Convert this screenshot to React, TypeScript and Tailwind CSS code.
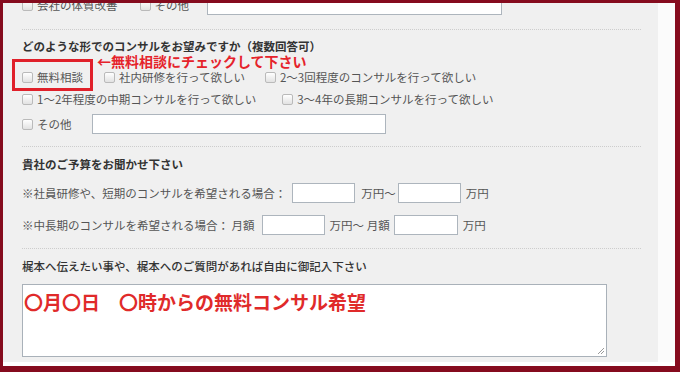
const FONT = { fontFamily: '"Noto Sans CJK JP", "Noto Sans", sans-serif' }

function Box() {
  return (
    <span className="inline-block w-[11px] h-[11px] shrink-0 rounded-[2px] border border-[#bababa] bg-linear-to-b from-white to-[#e2e2e2]" />
  )
}

function Opt({ label, className = '' }: { label: string; className?: string }) {
  return (
    <span className={`flex items-center gap-[4px] ${className}`}>
      <Box />
      <span className="whitespace-nowrap">{label}</span>
    </span>
  )
}

function Field({ w, className = '' }: { w: string; className?: string }) {
  return <input readOnly className={`${w} h-[20px] shrink-0 border border-[#adb5bd] bg-white ${className}`} />
}

function Sep({ className = '' }: { className?: string }) {
  return <div className={`border-t border-dotted border-[#cdcdcd] mr-[17px] ${className}`} />
}

export default function App() {
  return (
    <div
      className="w-[680px] h-[372px] bg-[#850b1e] pt-[3px] pl-[3px] pr-[5px] pb-[6px] text-[11.5px] leading-[14px] text-[#555]"
      style={FONT}
    >
      <div className="flex h-full bg-white pb-[4px]">
        {/* form panel */}
        <div className="w-[655px] h-full overflow-hidden bg-[#f0f0f0] pl-[19px]">
          {/* previous question, scrolled off */}
          <div className="-mt-[8px] flex items-center h-[20px]">
            <Opt label="会社の体質改善" />
            <Opt label="その他" className="ml-[22px]" />
            <Field w="w-[295px]" className="ml-[18px]" />
          </div>

          <Sep className="mt-[14px]" />

          <div className="mt-[8px] h-[16px] leading-[16px] font-bold text-[#333]">
            どのような形でのコンサルをお望みですか（複数回答可）
          </div>
          <div className="ml-[75px] h-[15px] leading-[15px] text-[14px] font-bold text-[#e5232b] whitespace-nowrap">
            ←無料相談にチェックして下さい
          </div>

          <div className="relative mt-[1px] flex items-center h-[14px]">
            <Opt label="無料相談" />
            <Opt label="社内研修を行って欲しい" className="ml-[21px]" />
            <Opt label="2～3回程度のコンサルを行って欲しい" className="ml-[20px]" />
            {/* highlight frame */}
            <div className="absolute -left-[10px] -top-[11px] w-[81px] h-[32px] border-[3px] border-[#e0202a]" />
          </div>

          <div className="mt-[8px] flex items-center h-[14px]">
            <Opt label="1～2年程度の中期コンサルを行って欲しい" />
            <Opt label="3～4年の長期コンサルを行って欲しい" className="ml-[26px]" />
          </div>

          <div className="mt-[8px] flex items-center h-[20px]">
            <Opt label="その他" />
            <Field w="w-[294px]" className="ml-[20px]" />
          </div>

          <Sep className="mt-[12px]" />

          <div className="mt-[9px] h-[16px] leading-[16px] font-bold text-[#333]">
            貴社のご予算をお聞かせ下さい
          </div>

          <div className="mt-[11px] flex items-center h-[20px] whitespace-nowrap">
            <span>※社員研修や、短期のコンサルを希望される場合：</span>
            <Field w="w-[63px]" className="ml-[6px]" />
            <span className="ml-[6px]">万円～</span>
            <Field w="w-[63px]" className="ml-[2px]" />
            <span className="ml-[5px]">万円</span>
          </div>

          <div className="mt-[12px] flex items-center h-[20px] whitespace-nowrap">
            <span>※中長期のコンサルを希望される場合： 月額</span>
            <Field w="w-[63px]" className="ml-[7px]" />
            <span className="ml-[5px]">万円～ 月額</span>
            <Field w="w-[64px]" className="ml-[4px]" />
            <span className="ml-[5px]">万円</span>
          </div>

          <Sep className="mt-[13px]" />

          <div className="mt-[9px] h-[16px] leading-[16px] font-medium text-[#333]">
            梶本へ伝えたい事や、梶本へのご質問があれば自由に御記入下さい
          </div>

          <div className="relative mt-[10px] w-[585px] h-[73px] border border-[#a9b1b9] bg-white pl-[1px] pt-[5px]">
            <div className="text-[19px] leading-[24px] font-bold text-[#e02a2a] whitespace-nowrap">
              〇月〇日　〇時からの無料コンサル希望
            </div>
            <svg className="absolute right-[1px] bottom-[1px]" width="8" height="8" viewBox="0 0 8 8">
              <path d="M7 1 L1 7 M7 4 L4 7" stroke="#9a9a9a" strokeWidth="1" />
            </svg>
          </div>
        </div>
        {/* page margin */}
        <div className="flex-1 bg-[#fbfbfb]" />
      </div>
    </div>
  )
}
